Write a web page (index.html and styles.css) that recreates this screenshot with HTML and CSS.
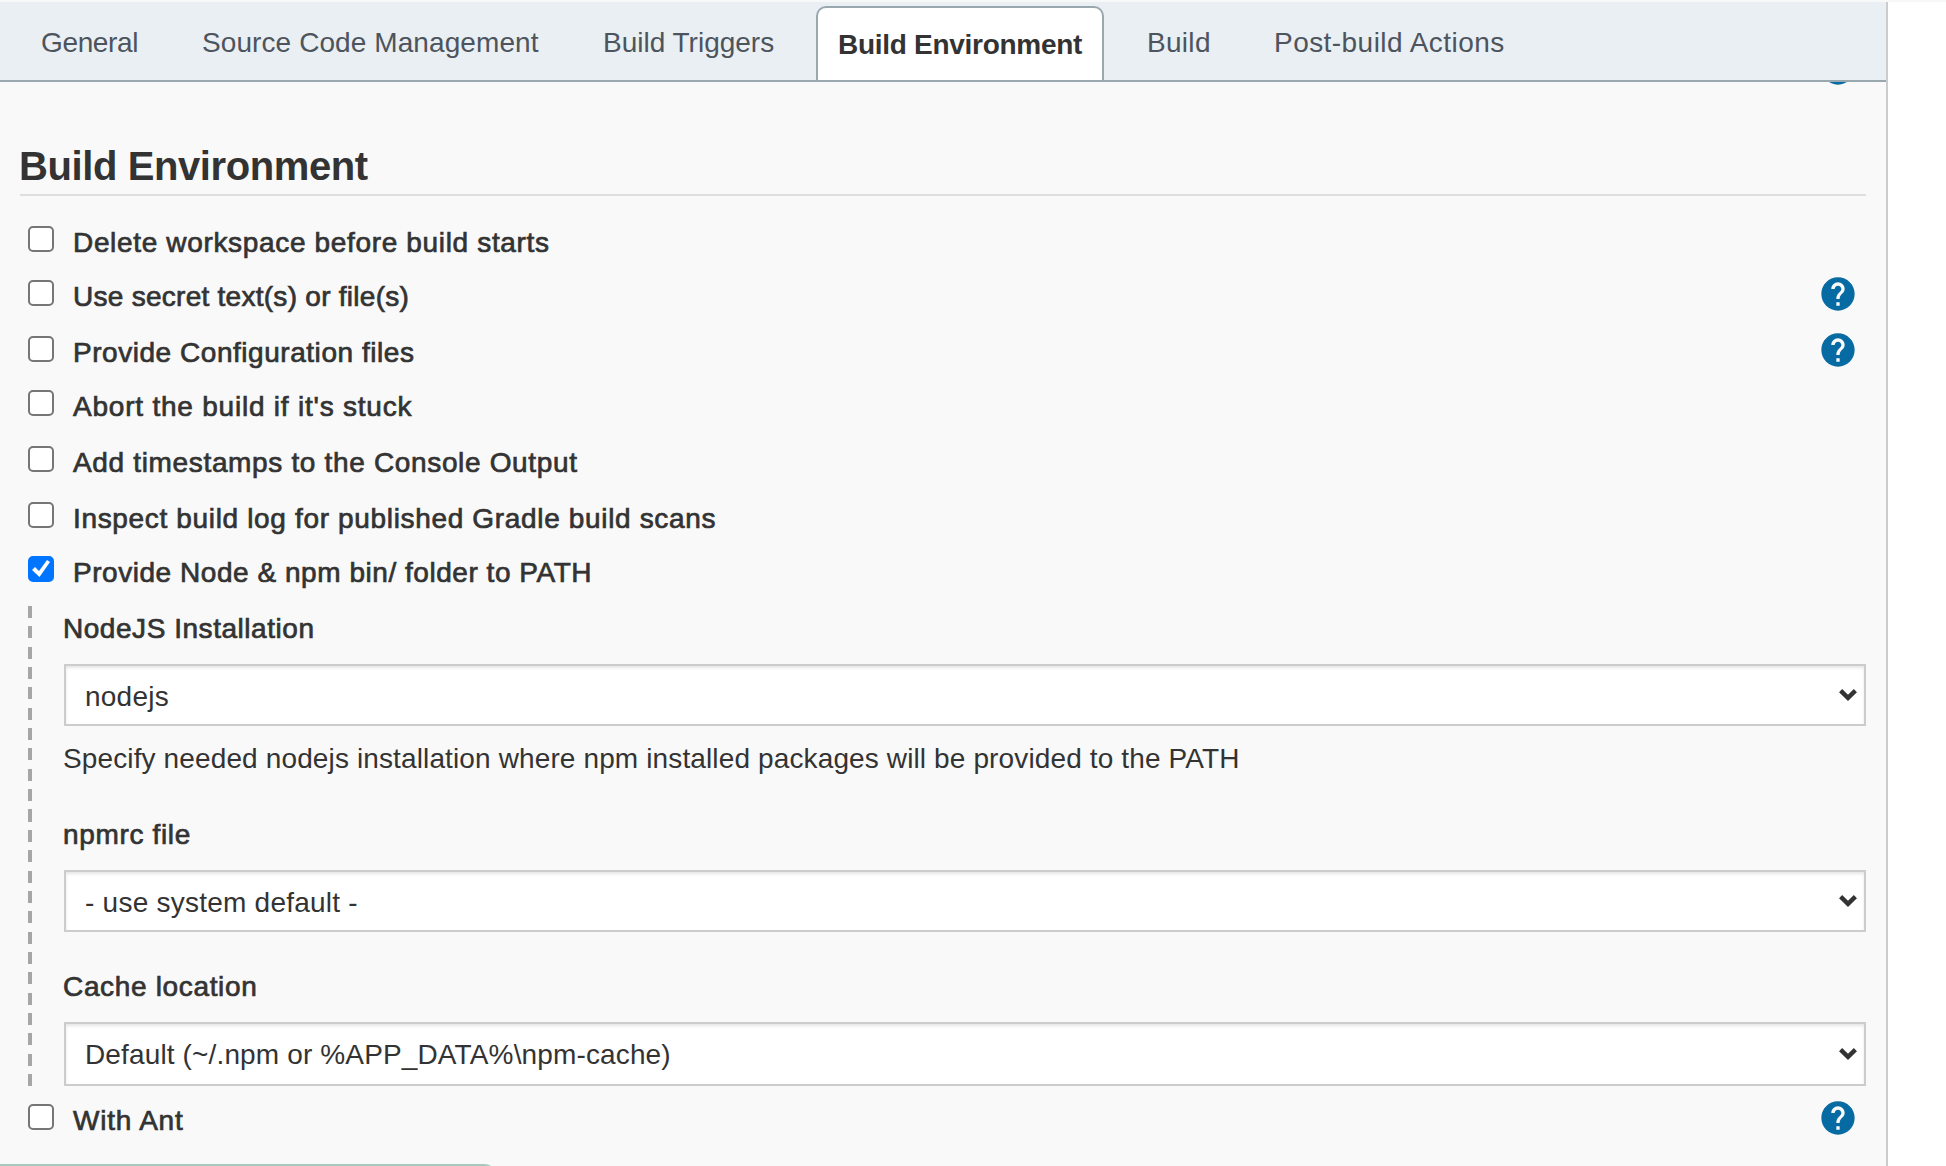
FILE: index.html
```html
<!DOCTYPE html>
<html lang="en">
<head>
<meta charset="utf-8">
<title>Build Environment</title>
<link rel="stylesheet" href="styles.css">
</head>
<body>
<svg class="defs" aria-hidden="true">
  <symbol id="help" viewBox="0 0 24 24"><path d="M12 2C6.480 2 2 6.480 2 12s4.480 10 10 10 10-4.480 10-10S17.520 2 12 2zm1 17h-2v-2h2v2zm2.070-7.750l-.9.920C13.450 12.900 13 13.500 13 15h-2v-.5c0-1.100.450-2.100 1.170-2.830l1.240-1.260c.370-.360.590-.860.590-1.410 0-1.100-.9-2-2-2s-2 .9-2 2H8c0-2.210 1.790-4 4-4s4 1.790 4 4c0 .880-.360 1.680-.930 2.250z"/></symbol>
  <symbol id="chevron" viewBox="0 0 20 14"><path d="M2.600 2.600 10 9.900l7.400-7.300" fill="none" stroke="#333" stroke-width="4.400"/></symbol>
</svg>
<div class="page">
  <nav class="tabs">
    <a class="tab tab-general">General</a>
    <a class="tab tab-scm">Source Code Management</a>
    <a class="tab tab-triggers">Build Triggers</a>
    <a class="tab tab-active">Build Environment</a>
    <a class="tab tab-build">Build</a>
    <a class="tab tab-post">Post-build Actions</a>
  </nav>
  <main class="content">
    <svg class="help help-scrolled"><use href="#help"/></svg>
    <h1 class="title">Build Environment</h1>
    <div class="rows">
      <label class="row"><input type="checkbox" class="check"><span class="label">Delete workspace before build starts</span></label>
      <label class="row"><input type="checkbox" class="check"><span class="label label-narrow">Use secret text(s) or file(s)</span><svg class="help"><use href="#help"/></svg></label>
      <label class="row row-tall"><input type="checkbox" class="check"><span class="label label-snug">Provide Configuration files</span><svg class="help"><use href="#help"/></svg></label>
      <label class="row"><input type="checkbox" class="check"><span class="label label-wide">Abort the build if it's stuck</span></label>
      <label class="row row-tall"><input type="checkbox" class="check"><span class="label">Add timestamps to the Console Output</span></label>
      <label class="row row-tall"><input type="checkbox" class="check"><span class="label">Inspect build log for published Gradle build scans</span></label>
      <label class="row"><input type="checkbox" class="check" checked><span class="label label-snug">Provide Node &amp; npm bin/ folder to PATH</span></label>
    </div>
    <div class="nested">
      <div class="label label-snug">NodeJS Installation</div>
      <div class="picker">
        <select class="select"><option>nodejs</option></select>
        <svg class="chevron"><use href="#chevron"/></svg>
      </div>
      <div class="description">Specify needed nodejs installation where npm installed packages will be provided to the PATH</div>
      <div class="label">npmrc file</div>
      <div class="picker">
        <select class="select"><option>- use system default -</option></select>
        <svg class="chevron"><use href="#chevron"/></svg>
      </div>
      <div class="label label-next">Cache location</div>
      <div class="picker picker-tall">
        <select class="select select-path"><option>Default (~/.npm or %APP_DATA%\npm-cache)</option></select>
        <svg class="chevron"><use href="#chevron"/></svg>
      </div>
    </div>
    <label class="row row-last"><input type="checkbox" class="check"><span class="label label-wide">With Ant</span><svg class="help"><use href="#help"/></svg></label>
  </main>
</div>
<div class="save-bar"></div>
</body>
</html>
```
FILE: styles.css
```css
* { box-sizing: border-box; }

body {
  margin: 0;
  height: 1166px;
  overflow: hidden;
  position: relative;
  background: #fff;
  border-top: 2px solid #f7f9f9;
  color: #333;
  font: 28px/32px "Liberation Sans", Arial, sans-serif;
}

.defs { display: none; }

.page {
  width: 1888px;
  height: 1164px;
  border-right: 2px solid #ccc;
  background: #f9f9f9;
}

.tabs {
  position: relative;
  z-index: 1;
  display: flex;
  gap: 20px;
  height: 80px;
  padding: 4px 0 0 18px;
  background: #e9eff2;
  border-bottom: 2px solid #98a8ae;
}

.tab {
  padding: 19px 20px 0;
  border: 2px solid transparent;
  border-bottom: 0;
  color: #4d545d;
  white-space: nowrap;
}

.tab-general { width: 142px; padding-left: 21px; letter-spacing: -0.35px; }
.tab-scm { width: 381px; letter-spacing: 0.09px; }
.tab-triggers { width: 215px; }
.tab-active {
  width: 288px;
  padding-top: 21px;
  background: #fff;
  border-color: #98a8ae;
  border-radius: 10px 10px 0 0;
  color: #333;
  font-weight: bold;
  letter-spacing: -0.28px;
}
.tab-build { width: 108px; padding-left: 21px; letter-spacing: 0.3px; }
.tab-post { letter-spacing: 0.45px; }

.content {
  position: relative;
  padding: 61px 20px 0;
}

.title {
  margin: 0 0 16px;
  height: 53px;
  border-bottom: 2px solid #dedede;
  font-size: 40px;
  line-height: 46px;
  letter-spacing: -0.4px;
  text-indent: -1px;
}

.row {
  display: flex;
  align-items: flex-end;
  gap: 19px;
  height: 54px;
  padding: 0 8px 7px;
}
.row-tall { height: 56px; }
.row-last { height: 58px; }

.check {
  appearance: none;
  flex: none;
  display: grid;
  place-items: center;
  width: 26px;
  height: 26px;
  margin: 0 0 7px;
  border: 2px solid #767676;
  border-radius: 5px;
  background: #fff;
}
.check:checked {
  border-color: #0075ff;
  background: #0075ff;
}
.check:checked::before {
  content: "";
  width: 20px;
  height: 18px;
  background: #fff;
  clip-path: polygon(1px 10px, 4px 7px, 8px 11px, 16px 0, 19px 2px, 8.500px 17px);
}

.label {
  letter-spacing: 0.66px;
  -webkit-text-stroke: 0.7px #333;
}
.label-narrow { letter-spacing: 0.27px; }
.label-snug { letter-spacing: 0.54px; }
.label-wide { letter-spacing: 0.78px; }

.help {
  width: 40px;
  height: 40px;
  margin: 0 0 -1px auto;
  fill: #066aa3;
}
.help-scrolled {
  position: absolute;
  top: -34px;
  right: 28px;
}

.nested {
  margin: 10px 0 0 8px;
  height: 480px;
  padding: 7px 0 0 35px;
  background: repeating-linear-gradient(#a6a6a6 0 12px, transparent 12px 20.350px) 0 0 / 4px 100% no-repeat;
}

.picker {
  display: grid;
  align-items: center;
  height: 62px;
  margin: 19px 0 0 1px;
}
.picker-tall { height: 64px; }

.select {
  grid-area: 1 / 1;
  appearance: none;
  width: 100%;
  height: 100%;
  padding: 4px 19px 0;
  border: 2px solid #ccc;
  border-radius: 0;
  outline: 0;
  background: #fff;
  box-shadow: inset 0 2px 3px rgba(0, 0, 0, 0.1);
  color: #333;
  font: inherit;
  letter-spacing: 0.24px;
}
.select-path { padding-top: 2px; letter-spacing: 0.14px; }

.chevron {
  grid-area: 1 / 1;
  justify-self: end;
  width: 20px;
  height: 14px;
  margin-right: 8px;
  pointer-events: none;
}

.description {
  margin: 17px 0 44px;
  letter-spacing: 0.128px;
}
.label-next { margin-top: 39px; }

.save-bar {
  position: absolute;
  left: 0;
  bottom: -30px;
  width: 498px;
  height: 32px;
  border-radius: 0 14px 0 0;
  background: #a5c9bd;
}
```
